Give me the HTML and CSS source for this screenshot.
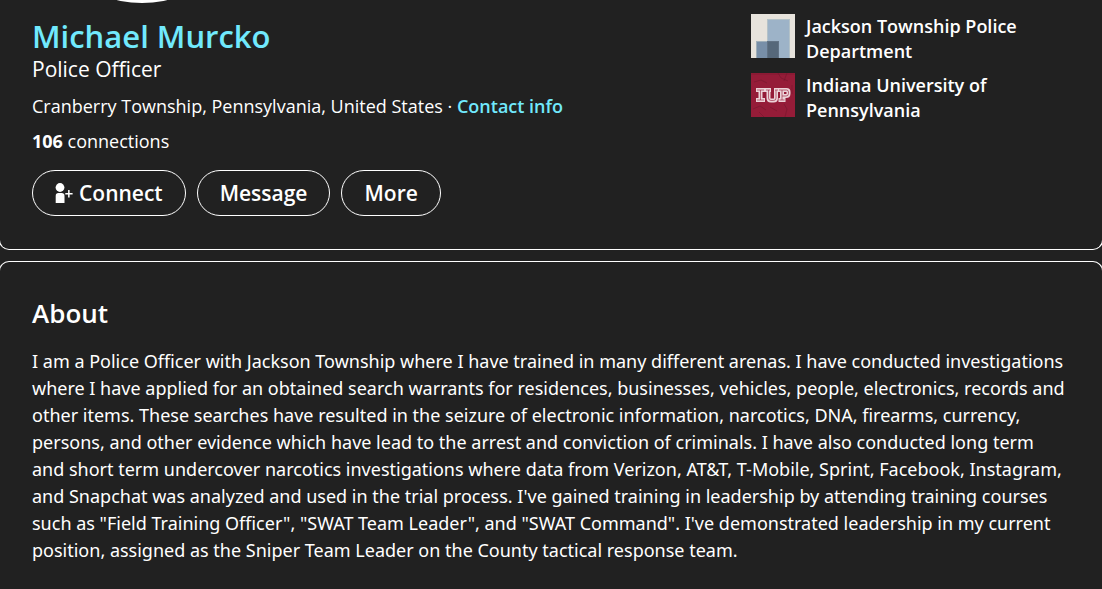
FILE: index.html
```html
<!DOCTYPE html>
<html lang="en">
<head>
<meta charset="utf-8">
<title>Michael Murcko</title>
<link rel="stylesheet" href="styles.css">
</head>
<body>

<main>
	<section class="card top-card">
		<div class="avatar"></div>
		<div class="top-row">
			<div class="intro">
				<h1 class="name">Michael Murcko</h1>
				<div class="headline">Police Officer</div>
				<div class="location">Cranberry Township, Pennsylvania, United States · <a href="#contact">Contact info</a></div>
				<div class="connections"><b>106</b> connections</div>
				<div class="actions">
					<button type="button" class="pill">
						<svg class="pill-icon" viewBox="0 0 18 20" aria-hidden="true">
							<circle cx="5" cy="4.5" r="4.4"/>
							<path d="M.7 20v-7.2Q.7 10 3.4 10h3.2q2.900 0 2.900 2.800V20z"/>
							<path d="M13.100 7h1.500v3h3v1.500h-3v3h-1.500v-3h-2.800V10h2.800z"/>
						</svg>
						Connect
					</button>
					<button type="button" class="pill">Message</button>
					<button type="button" class="pill">More</button>
				</div>
			</div>
			<ul class="orgs">
				<li class="org">
					<svg class="org-logo" viewBox="0 0 44 44" aria-hidden="true">
						<path fill="#e7e3dc" d="M0 0h44v44H0z"/>
						<path fill="#b4c2c8" d="M16 5h23v39H16z"/>
						<path fill="#9db3c8" d="M17 6h21v38H17z"/>
						<path fill="#a0afb9" d="M5 27h11v17H5z"/>
						<path fill="#788fa8" d="M6 28h11v16H6z"/>
						<path fill="#627385" d="M16 27h12v17H16z"/>
						<path fill="#56687a" d="M17 28h10v16H17z"/>
					</svg>
					<span>Jackson Township Police Department</span>
				</li>
				<li class="org">
					<svg class="org-logo" viewBox="0 0 44 44" aria-hidden="true">
						<path fill="#951c38" d="M0 0h44v44H0z"/>
						<g fill="none" stroke="#75172d" stroke-opacity=".6">
							<path d="M0 1h44M27 0l3 5 7 3M36 0l-3 8M3 9l7-2 6 3M41 12v9M2 36l7-3 6 4M33 31l3 5-2 8M19 34l7 4M8 39l5 5"/>
						</g>
						<g fill="none" stroke="#ecd3d8" stroke-width="4">
							<path d="M5 17h9M5 27h9M9.500 16v12"/>
							<path d="M14 17h6M23 17h5M17.500 17v8q0 2.500 2.500 2.500h2.500q2.500 0 2.500-2.500v-8"/>
							<path d="M27 17h8.500q2 0 2 2v1.500q0 2.500-2.500 2.500h-4M31 17v10M27.500 27h7"/>
						</g>
						<g fill="none" stroke="#951c38" stroke-width=".6">
							<path d="M6 17h7M6 27h7M9.500 17v10"/>
							<path d="M15 17h4M24 17h3M17.500 17v8q0 2.500 2.500 2.500h2.500q2.500 0 2.500-2.500v-8"/>
							<path d="M28 17h7.500q2 0 2 2v1.500q0 2.500-2.500 2.500h-4M31 17v10M28.500 27h5"/>
						</g>
					</svg>
					<span>Indiana University of Pennsylvania</span>
				</li>
			</ul>
		</div>
	</section>

	<section class="card about">
		<h2>About</h2>
		<p>I am a Police Officer with Jackson Township where I have trained in many different arenas. I have conducted investigations where I have applied for an obtained search warrants for residences, businesses, vehicles, people, electronics, records and other items. These searches have resulted in the seizure of electronic information, narcotics, DNA, firearms, currency, persons, and other evidence which have lead to the arrest and conviction of criminals. I have also conducted long term<br>
		and short term undercover narcotics investigations where data from Verizon, AT&amp;T, T-Mobile, Sprint, Facebook, Instagram,<br>
		and Snapchat was analyzed and used in the trial process. I've gained training in leadership by attending training courses<br>
		such as "Field Training Officer", "SWAT Team Leader", and "SWAT Command". I've demonstrated leadership in my current<br>
		position, assigned as the Sniper Team Leader on the County tactical response team.</p>
	</section>
</main>

</body>
</html>
```

FILE: styles.css
```css
* {
	box-sizing: border-box;
}

body {
	margin: 0;
	background: #212121;
	color: #fff;
	font: 18px/24px "Segoe UI", "Open Sans", "Noto Sans", sans-serif;
	overflow-x: hidden;
}

main {
	display: flex;
	flex-direction: column;
	gap: 11px;
	min-height: 100vh;
}

.card {
	margin: 0 -1px;
	padding: 0 32px;
	border: 1px solid #fff;
	border-radius: 10px;
}

.top-card {
	border-top: 0;
	border-radius: 0 0 10px 10px;
	padding-bottom: 33px;
}

/* only the bottom edge of the photo ring shows */
.avatar {
	width: 220px;
	height: 220px;
	margin-top: -217px;
	border-radius: 50%;
	background: #fff;
}

.top-row {
	display: flex;
	justify-content: space-between;
	gap: 32px;
	padding-top: 11px;
}

.intro {
	padding-top: 3px;
}

.name {
	margin: 0;
	color: #71e9fd;
	font-size: 31px;
	font-weight: 600;
	line-height: 38px;
}

.headline {
	font-size: 21px;
	line-height: 28px;
}

.location {
	margin-top: 11px;
}

a {
	color: #71e9fd;
	font-weight: 600;
	text-decoration: none;
}

.connections {
	margin-top: 11px;
}

.actions {
	display: flex;
	gap: 11px;
	margin-top: 17px;
}

.pill {
	display: flex;
	align-items: center;
	gap: 6px;
	height: 46px;
	padding: 0 22px;
	border: 1px solid #fff;
	border-radius: 23px;
	background: none;
	color: inherit;
	font: inherit;
	font-size: 21px;
	font-weight: 600;
}

.pill-icon {
	width: 18px;
	height: 20px;
	fill: #fff;
}

.orgs {
	flex: 0 0 319px;
	margin: 0;
	padding: 0;
	list-style: none;
	display: flex;
	flex-direction: column;
	gap: 11px;
}

.org {
	display: flex;
	gap: 11px;
	font-weight: 600;
	line-height: 25px;
}

.org span {
	max-width: 240px;
}

.org-logo {
	flex: none;
	width: 44px;
	height: 44px;
}

/* two text lines are taller than the logo, so pull the rows together */
.org + .org {
	margin-top: -2px;
}

.about {
	flex: 1;
	padding-top: 32px;
	border-bottom: 0;
	border-radius: 10px 10px 0 0;
}

.about h2 {
	margin: 0;
	font-size: 26px;
	font-weight: 600;
	line-height: 38px;
}

.about p {
	margin: 16px 0 0;
	font-family: "Segoe UI", "Noto Sans", sans-serif;
	line-height: 27px;
}
```
